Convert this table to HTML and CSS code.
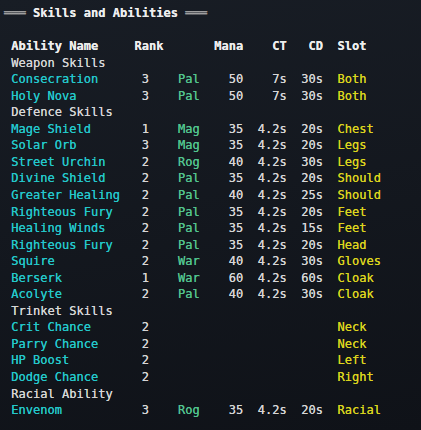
FILE: index.html
```html
<!DOCTYPE html>
<html lang="en">
<head>
  <meta charset="UTF-8">
  <meta name="viewport" content="width=device-width, initial-scale=1.0">
  <title>Skills and Abilities</title>
  <link rel="stylesheet" href="styles.css">
</head>
<body>
  <div class="panel">
    <h2 class="title"><span class="rule">═══</span> Skills and Abilities <span class="rule">═══</span></h2>

    <div class="table">
      <div class="row head">
        <span>Ability Name</span><span>Rank</span><span></span>
        <span class="num">Mana</span><span class="num">CT</span><span class="num">CD</span>
        <span class="slot">Slot</span>
      </div>

      <div class="section">Weapon Skills</div>
      <div class="row"><span class="name">Consecration</span><span class="rank">3</span><span class="cls">Pal</span><span class="num">50</span><span class="num">7s</span><span class="num">30s</span><span class="slot">Both</span></div>
      <div class="row"><span class="name">Holy Nova</span><span class="rank">3</span><span class="cls">Pal</span><span class="num">50</span><span class="num">7s</span><span class="num">30s</span><span class="slot">Both</span></div>

      <div class="section">Defence Skills</div>
      <div class="row"><span class="name">Mage Shield</span><span class="rank">1</span><span class="cls">Mag</span><span class="num">35</span><span class="num">4.2s</span><span class="num">20s</span><span class="slot">Chest</span></div>
      <div class="row"><span class="name">Solar Orb</span><span class="rank">3</span><span class="cls">Mag</span><span class="num">35</span><span class="num">4.2s</span><span class="num">20s</span><span class="slot">Legs</span></div>
      <div class="row"><span class="name">Street Urchin</span><span class="rank">2</span><span class="cls">Rog</span><span class="num">40</span><span class="num">4.2s</span><span class="num">30s</span><span class="slot">Legs</span></div>
      <div class="row"><span class="name">Divine Shield</span><span class="rank">2</span><span class="cls">Pal</span><span class="num">35</span><span class="num">4.2s</span><span class="num">20s</span><span class="slot">Should</span></div>
      <div class="row"><span class="name">Greater Healing</span><span class="rank">2</span><span class="cls">Pal</span><span class="num">40</span><span class="num">4.2s</span><span class="num">25s</span><span class="slot">Should</span></div>
      <div class="row"><span class="name">Righteous Fury</span><span class="rank">2</span><span class="cls">Pal</span><span class="num">35</span><span class="num">4.2s</span><span class="num">20s</span><span class="slot">Feet</span></div>
      <div class="row"><span class="name">Healing Winds</span><span class="rank">2</span><span class="cls">Pal</span><span class="num">35</span><span class="num">4.2s</span><span class="num">15s</span><span class="slot">Feet</span></div>
      <div class="row"><span class="name">Righteous Fury</span><span class="rank">2</span><span class="cls">Pal</span><span class="num">35</span><span class="num">4.2s</span><span class="num">20s</span><span class="slot">Head</span></div>
      <div class="row"><span class="name">Squire</span><span class="rank">2</span><span class="cls">War</span><span class="num">40</span><span class="num">4.2s</span><span class="num">30s</span><span class="slot">Gloves</span></div>
      <div class="row"><span class="name">Berserk</span><span class="rank">1</span><span class="cls">War</span><span class="num">60</span><span class="num">4.2s</span><span class="num">60s</span><span class="slot">Cloak</span></div>
      <div class="row"><span class="name">Acolyte</span><span class="rank">2</span><span class="cls">Pal</span><span class="num">40</span><span class="num">4.2s</span><span class="num">30s</span><span class="slot">Cloak</span></div>

      <div class="section">Trinket Skills</div>
      <div class="row"><span class="name">Crit Chance</span><span class="rank">2</span><span></span><span></span><span></span><span></span><span class="slot">Neck</span></div>
      <div class="row"><span class="name">Parry Chance</span><span class="rank">2</span><span></span><span></span><span></span><span></span><span class="slot">Neck</span></div>
      <div class="row"><span class="name">HP Boost</span><span class="rank">2</span><span></span><span></span><span></span><span></span><span class="slot">Left</span></div>
      <div class="row"><span class="name">Dodge Chance</span><span class="rank">2</span><span></span><span></span><span></span><span></span><span class="slot">Right</span></div>

      <div class="section">Racial Ability</div>
      <div class="row"><span class="name">Envenom</span><span class="rank">3</span><span class="cls">Rog</span><span class="num">35</span><span class="num">4.2s</span><span class="num">20s</span><span class="slot">Racial</span></div>
    </div>
  </div>
</body>
</html>
```

FILE: styles.css
```css
:root {
  --bg-top: #181d25;
  --bg-bottom: #0f1218;
  --text: #d6d6d6;
  --heading: #ededed;
  --rule: #a3a3a3;
  --name: #24c8cb;
  --class: #52c48f;
  --slot: #dcd41e;
  --line: 16.55px;
}

* {
  margin: 0;
  padding: 0;
  box-sizing: border-box;
}

html, body {
  height: 100%;
}

body {
  font-family: 'DejaVu Sans Mono', 'Liberation Mono', monospace;
  font-size: 12.05px;
  line-height: var(--line);
  color: var(--text);
  background: linear-gradient(170deg, var(--bg-top), var(--bg-bottom));
  text-shadow: 0 0 0.4px currentColor;
}

.panel {
  padding: 5px 4px;
}

.title {
  font-size: inherit;
  font-weight: 700;
  color: var(--heading);
  margin-bottom: var(--line);
  white-space: pre;
}

.rule {
  color: var(--rule);
}

.table {
  padding-left: 1ch;
}

.row {
  display: grid;
  grid-template-columns: 17ch 6ch 5ch 4ch 6ch 5ch auto;
  white-space: pre;
}

.head {
  font-weight: 700;
  color: var(--heading);
}

.section {
  color: var(--text);
}

.name {
  color: var(--name);
}

.rank {
  padding-left: 1ch;
}

.cls {
  color: var(--class);
}

.num {
  text-align: right;
}

.slot {
  padding-left: 2ch;
  color: var(--slot);
}

.head .slot {
  color: var(--heading);
}
```
